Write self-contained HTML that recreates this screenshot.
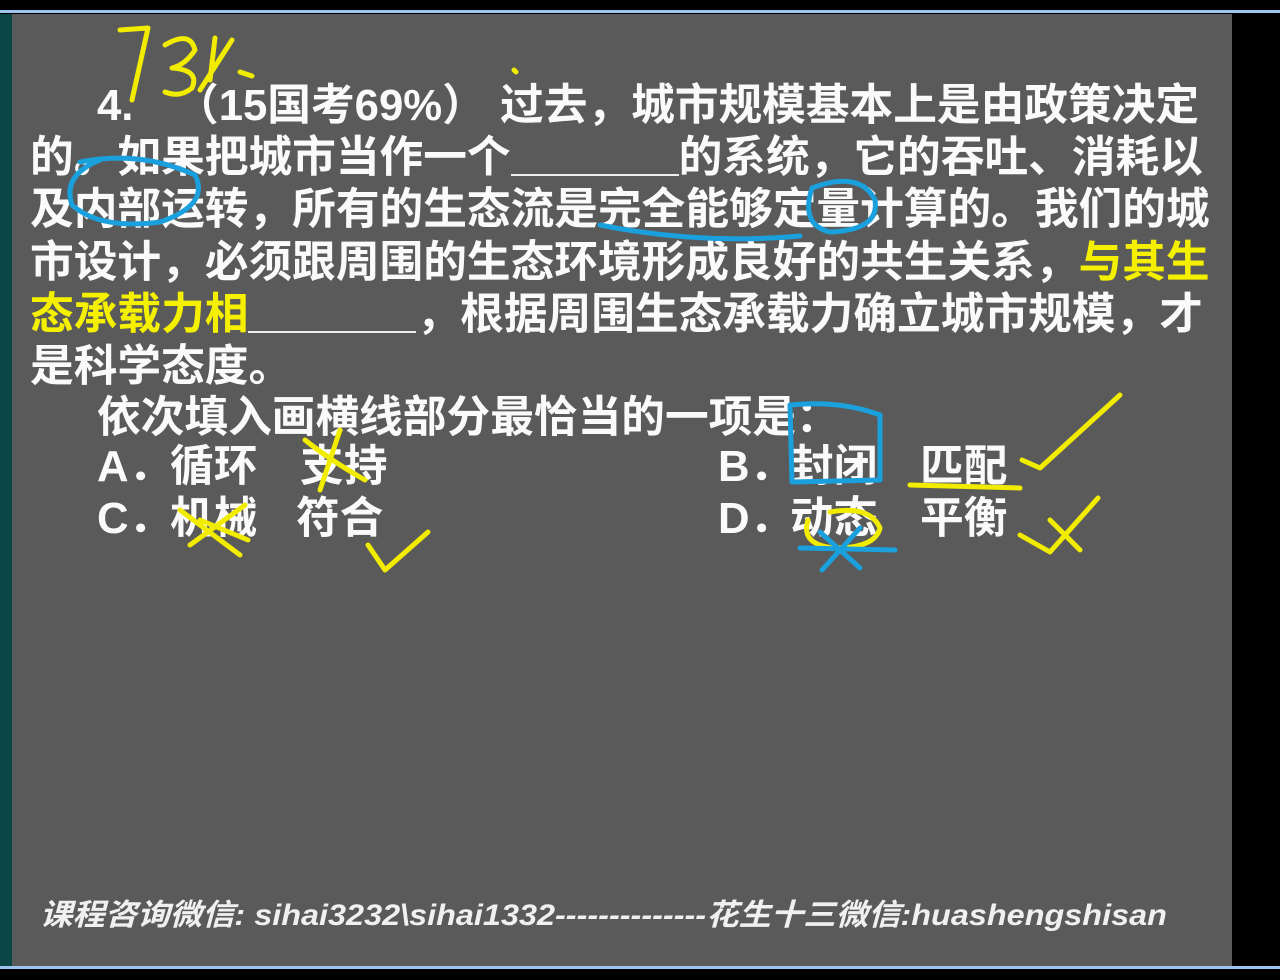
<!DOCTYPE html>
<html><head><meta charset="utf-8"><style>
body{margin:0;width:1280px;height:980px;background:#000;position:relative;overflow:hidden;font-family:"Liberation Sans","Noto Sans CJK SC",sans-serif;}
.bl{position:absolute;left:0;width:1280px;height:3px;background:#9cc4ee;}
.slide{position:absolute;left:12px;top:14px;width:1220px;height:952px;background:#5a5a5a;}
.teal{position:absolute;left:0;top:14px;width:12px;height:952px;background:#0a4646;}
.ln{position:absolute;font-size:43.7px;font-weight:bold;color:#fafafa;white-space:nowrap;line-height:52px;}
.y{color:#f5f000}
.u{display:inline-block;border-bottom:2px solid #eee;height:42px;vertical-align:top;}
.ft{position:absolute;left:40px;top:890px;font-size:30px;font-weight:bold;font-style:italic;color:#f0f0f0;white-space:nowrap;transform:scaleX(1.08);transform-origin:0 0;}
</style></head><body>
<div class="bl" style="top:10px"></div>
<div class="bl" style="top:966px"></div>
<div class="teal"></div>
<div class="slide"></div>
<div class="ln" style="left:97px;top:80px">4.</div>
<div class="ln" style="left:175px;top:80px">（15国考69%）</div>
<div class="ln" style="left:500px;top:80px">过去，城市规模基本上是由政策决定</div>
<div class="ln" style="left:30px;top:132px">的。如果把城市当作一个<span class="u" style="width:168px"></span>的系统，它的吞吐、消耗以</div>
<div class="ln" style="left:30px;top:184px">及内部运转，所有的生态流是完全能够定量计算的。我们的城</div>
<div class="ln" style="left:30px;top:237px">市设计，必须跟周围的生态环境形成良好的共生关系，<span class="y">与其生</span></div>
<div class="ln" style="left:30px;top:289px"><span class="y">态承载力相</span><span class="u" style="width:168px"></span>，根据周围生态承载力确立城市规模，才</div>
<div class="ln" style="left:30px;top:341px">是科学态度。</div>
<div class="ln" style="left:97px;top:392px">依次填入画横线部分最恰当的一项是：</div>
<div class="ln" style="left:97px;top:441px">A．</div><div class="ln" style="left:170px;top:441px">循环</div><div class="ln" style="left:300px;top:441px">支持</div>
<div class="ln" style="left:97px;top:493px">C．</div><div class="ln" style="left:170px;top:493px">机械</div><div class="ln" style="left:296px;top:493px">符合</div>
<div class="ln" style="left:718px;top:441px">B．</div><div class="ln" style="left:790px;top:441px">封闭</div><div class="ln" style="left:920px;top:441px">匹配</div>
<div class="ln" style="left:718px;top:493px">D．</div><div class="ln" style="left:790px;top:493px">动态</div><div class="ln" style="left:920px;top:493px">平衡</div>
<div class="ft">课程咨询微信: sihai3232\sihai1332--------------花生十三微信:huashengshisan</div>
<svg width="1280" height="980" style="position:absolute;left:0;top:0" fill="none" stroke-linecap="round" stroke-linejoin="round">
<g stroke="#f2ec00" stroke-width="5">
<path d="M120 30 L148 28 L132 100"/>
<path d="M165 45 Q190 30 195 50 Q185 65 172 68 Q200 70 192 88 Q180 98 165 92"/>
<path d="M215 38 L210 80 M232 40 L200 90 M240 72 L252 76"/>
<path d="M514 70 L516 72"/>
<path d="M305 440 Q330 460 365 480 M340 430 L320 490"/>
<path d="M180 510 L240 555 M190 545 L245 505 M200 520 L248 540"/>
<path d="M368 545 L385 570 L428 532"/>
<path d="M1022 460 L1040 468 L1120 395"/>
<path d="M910 485 L1020 488"/>
<path d="M1020 535 L1050 552 L1098 498 M1050 520 L1080 550"/>
<path d="M808 520 Q800 545 835 548 Q875 548 880 528 Q870 505 830 512"/>
</g>
<g stroke="#1aa0dc" stroke-width="5">
<path d="M80 162 Q140 150 195 175 Q210 205 160 222 Q100 230 72 205 Q62 175 100 160"/>
<path d="M600 225 Q700 245 800 236"/>
<path d="M812 188 Q860 170 875 200 Q880 230 830 232 Q800 225 812 188"/>
<path d="M790 405 Q840 400 880 415 L880 480 L792 482 Z"/>
<path d="M820 532 L860 568 M860 528 L822 570"/>
<path d="M800 548 L895 550"/>
</g>
</svg>
</body></html>
